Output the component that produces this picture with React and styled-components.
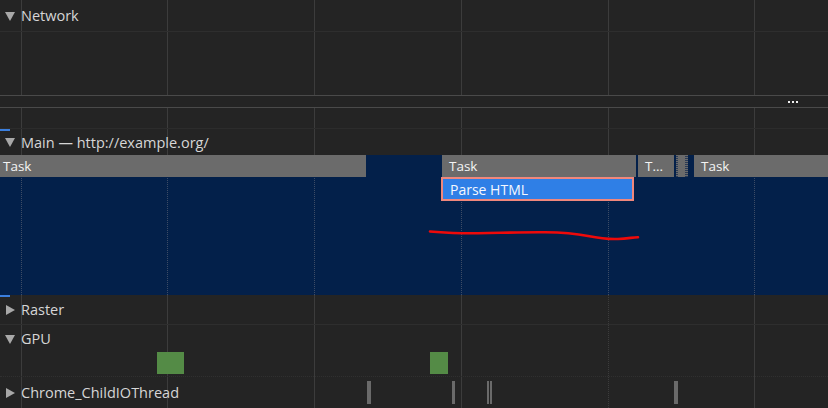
import React from "react";
import styled, { createGlobalStyle } from "styled-components";

const Global = createGlobalStyle`
  html, body { margin: 0; padding: 0; background: #242424; }
  body { font-family: "Open Sans", "Liberation Sans", Arial, sans-serif; }
`;

const GRID = [21, 167, 314, 461, 608, 754];

const Page = styled.div`
  width: 828px;
  height: 408px;
  background: #242424;
  position: relative;
  overflow: hidden;
  display: flex;
  flex-direction: column;
  color: #d4d4d4;
`;

const Section = styled.div`
  position: relative;
  display: flex;
  flex-direction: column;
  height: ${(p) => p.$h}px;
  flex: none;
  background: ${(p) => p.$bg || "transparent"};
`;

const GridLayer = styled.div`
  position: absolute;
  inset: 0;
  pointer-events: none;
`;

const VLine = styled.div`
  position: absolute;
  top: 0;
  bottom: 0;
  width: 0;
  border-left: 1px ${(p) => (p.$dotted ? "dotted" : "solid")} ${(p) => p.$color || "#3c3c3c"};
`;

const Grid = ({ dotted = [], color }) => (
  <GridLayer>
    {GRID.map((x, i) => (
      <VLine key={x} style={{ left: x }} $dotted={dotted.includes(i)} $color={color} />
    ))}
  </GridLayer>
);

const Header = styled.div`
  position: relative;
  z-index: 1;
  height: ${(p) => p.$h}px;
  flex: none;
  display: flex;
  align-items: center;
  gap: 6px;
  padding-left: 5px;
  font-size: 14.5px;
  color: #d6d6d6;
  border-bottom: ${(p) => (p.$line ? `1px ${p.$line} #2e2e2e` : "none")};
  box-sizing: border-box;
`;

const Arrow = styled.span`
  display: inline-block;
  width: 0;
  height: 0;
  ${(p) =>
    p.$open
      ? `border-left: 5px solid transparent; border-right: 5px solid transparent; border-top: 9px solid #a8a8a8; margin-top: 1px;`
      : `border-top: 5px solid transparent; border-bottom: 5px solid transparent; border-left: 9px solid #a8a8a8; margin-left: 1px; margin-right: 0px;`}
`;

const Divider = styled.div`
  height: 13px;
  flex: none;
  box-sizing: border-box;
  border-top: 1px solid #4a4a4a;
  border-bottom: 1px solid #4a4a4a;
  display: flex;
  align-items: center;
  justify-content: flex-end;
  padding-right: 30px;
`;

const Dots = styled.div`
  display: flex;
  gap: 2px;
  span {
    width: 2px;
    height: 2px;
    background: #f0f0f0;
  }
`;

const Spacer = styled.div`
  height: ${(p) => p.$h}px;
  flex: none;
  position: relative;
  border-bottom: ${(p) => (p.$line ? "1px solid #2c2c2c" : "none")};
  box-sizing: border-box;
`;

const Marker = styled.div`
  position: absolute;
  left: 0;
  ${(p) => (p.$bottom ? "bottom: -2px;" : "top: 0;")}
  width: 10px;
  height: 2px;
  background: #3b7fde;
  z-index: 2;
`;

const TaskRow = styled.div`
  position: relative;
  height: 22px;
  flex: none;
  display: flex;
`;

const Task = styled.div`
  position: relative;
  z-index: 1;
  flex: none;
  width: ${(p) => p.$w}px;
  margin-left: ${(p) => p.$gap || 0}px;
  background: ${(p) =>
    p.$hatch
      ? "repeating-linear-gradient(180deg, #6b6b6b 0 1px, #2a3a55 1px 2px)"
      : "#6b6b6b"};
  color: #f4f4f4;
  font-size: 13.5px;
  display: flex;
  align-items: center;
  padding-left: ${(p) => (p.$pad != null ? p.$pad : 7)}px;
  box-sizing: border-box;
  white-space: nowrap;
  overflow: hidden;
`;

const EventRow = styled.div`
  position: relative;
  z-index: 1;
  height: 24px;
  flex: none;
  display: flex;
`;

const Event = styled.div`
  margin-left: ${(p) => p.$x}px;
  width: ${(p) => p.$w}px;
  box-sizing: border-box;
  background: #2f7fe6;
  border: 2px solid #f0877c;
  color: #f4f8ff;
  font-size: 14px;
  display: flex;
  align-items: center;
  padding-left: 7px;
`;

const Squiggle = styled.svg`
  position: absolute;
  left: 0;
  top: 0;
  z-index: 3;
  pointer-events: none;
`;

const Track = styled.div`
  position: relative;
  height: ${(p) => p.$h}px;
  flex: none;
  border-bottom: ${(p) => (p.$line ? `1px ${p.$line} #303030` : "none")};
  box-sizing: border-box;
`;

const Block = styled.div`
  position: absolute;
  z-index: 1;
  left: ${(p) => p.$x}px;
  top: ${(p) => p.$y}px;
  width: ${(p) => p.$w}px;
  height: ${(p) => p.$h}px;
  background: ${(p) => p.$c};
`;

export default function App() {
  return (
    <>
      <Global />
      <Page>
        <Section $h={95}>
          <Grid />
          <Header $h={32} $line="solid">
            <Arrow $open />
            Network
          </Header>
        </Section>
        <Divider>
          <Dots>
            <span />
            <span />
            <span />
          </Dots>
        </Divider>
        <Section $h={47}>
          <Grid />
          <Spacer $h={21} $line />
          <Header $h={26}>
            <Marker />
            <Arrow $open />
            Main — http://example.org/
          </Header>
        </Section>
        <Section $h={140} $bg="#03204a">
          <Grid dotted={[0, 1, 2, 3, 4, 5]} color="#3d4c66" />
          <TaskRow>
            <Task $w={366} $pad={3}>Task</Task>
            <Task $w={194} $gap={76}>Task</Task>
            <Task $w={36} $gap={2}>T...</Task>
            <Task $w={2} $gap={2} $pad={0} $hatch />
            <Task $w={7} $gap={0} $pad={0} />
            <Task $w={3} $gap={0} $pad={0} $hatch />
            <Task $w={134} $gap={6}>Task</Task>
          </TaskRow>
          <EventRow>
            <Event $x={441} $w={193}>Parse HTML</Event>
          </EventRow>
          <Squiggle width="828" height="140" viewBox="0 155 828 140">
            <path
              d="M430 231.5 C440 232.5 450 233 462 233.3 C490 233.3 520 232 545 232.3 C565 232.5 575 233.5 588 236 C598 238 606 239.5 618 239 C628 238.5 632 237.5 638 237.2"
              fill="none"
              stroke="#ee0a0a"
              strokeWidth="2.6"
              strokeLinecap="round"
            />
          </Squiggle>
          <Marker $bottom />
        </Section>
        <Section $h={113}>
          <Grid dotted={[4]} />
          <Header $h={30} $line="solid">
            <Arrow />
            Raster
          </Header>
          <Header $h={27}>
            <Arrow $open />
            GPU
          </Header>
          <Track $h={25} $line="dotted">
            <Block $x={157} $y={0} $w={27} $h={22} $c="#548b46" />
            <Block $x={430} $y={0} $w={18} $h={22} $c="#548b46" />
          </Track>
          <Header $h={31}>
            <Arrow />
            Chrome_ChildIOThread
            <Block $x={367} $y={4} $w={4} $h={23} $c="#6a6a6a" />
            <Block $x={452} $y={4} $w={3} $h={23} $c="#6a6a6a" />
            <Block $x={487} $y={4} $w={2} $h={23} $c="#6a6a6a" />
            <Block $x={490} $y={4} $w={2} $h={23} $c="#6a6a6a" />
            <Block $x={674} $y={4} $w={4} $h={23} $c="#6a6a6a" />
          </Header>
        </Section>
      </Page>
    </>
  );
}
